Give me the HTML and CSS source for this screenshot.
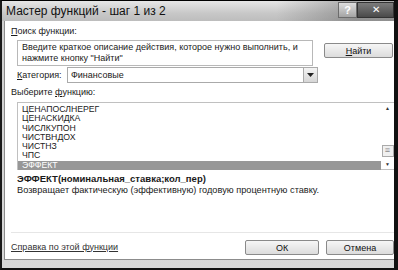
FILE: index.html
```html
<!DOCTYPE html>
<html lang="ru">
<head>
    <meta charset="UTF-8">
    <title>Мастер функций - шаг 1 из 2</title>
    <link rel="stylesheet" href="styles.css">
</head>
<body>
    <div class="window">
        <div class="titlebar">
            <span class="title">Мастер функций - шаг 1 из 2</span>
            <span class="tb-help">?</span>
            <span class="tb-close">✕</span>
        </div>
        <div class="frame">
            <div class="content">
                <div class="label"><u>П</u>оиск функции:</div>
                <div class="search-row">
                    <div class="search-box">Введите краткое описание действия, которое нужно выполнить, и нажмите кнопку "Найти"</div>
                    <button class="btn btn-find"><u>Н</u>айти</button>
                </div>
                <div class="cat-row">
                    <span class="cat-label"><u>К</u>атегория:</span>
                    <div class="select">
                        <span>Финансовые</span>
                        <span class="select-arrow"><svg width="7" height="4" viewBox="0 0 7 4"><path d="M0 0h7L3.5 4z" fill="#222"/></svg></span>
                    </div>
                </div>
                <div class="label label-list">Выберите <u>ф</u>ункцию:</div>
                <div class="list">
                    <div class="list-items">
                        <div class="item">ЦЕНАПОСЛНЕРЕГ</div>
                        <div class="item">ЦЕНАСКИДКА</div>
                        <div class="item">ЧИСЛКУПОН</div>
                        <div class="item">ЧИСТВНДОХ</div>
                        <div class="item">ЧИСТНЗ</div>
                        <div class="item">ЧПС</div>
                        <div class="item selected">ЭФФЕКТ</div>
                    </div>
                    <div class="scrollbar">
                        <span class="sb-arrow">▲</span>
                        <span class="sb-track"></span>
                        <span class="sb-thumb">≡</span>
                        <span class="sb-arrow">▼</span>
                    </div>
                </div>
                <div class="signature">ЭФФЕКТ(номинальная_ставка;кол_пер)</div>
                <div class="desc">Возвращает фактическую (эффективную) годовую процентную ставку.</div>
                <div class="footer">
                    <a class="help-link" href="#">Справка по этой функции</a>
                    <div class="footer-buttons">
                        <button class="btn btn-ok">ОК</button>
                        <button class="btn btn-cancel">Отмена</button>
                    </div>
                </div>
            </div>
        </div>
    </div>
</body>
</html>
```

FILE: styles.css
```css
body { margin: 0; font-family: "Liberation Sans", Arial, sans-serif; font-size: 9px; color: #1a1a1a; }
.window { width: 398px; height: 270px; box-sizing: border-box; display: flex; flex-direction: column; border-top: 1px solid #000; border-left: 2px solid #1a1a1a; border-right: 4px solid #111; border-bottom: 2px solid #111; background: #c8c8c8; }
.titlebar { height: 20px; display: flex; align-items: stretch; background: linear-gradient(to right, rgba(255,255,255,0) 70%, rgba(60,60,60,0.35) 90%), linear-gradient(to bottom, #e6e6e6, #c8c8c8 60%, #bdbdbd); }
.title { flex: 1; padding-left: 4px; line-height: 21px; font-size: 12px; color: #111; }
.tb-help { width: 17px; margin-top: 1px; height: 14px; background: linear-gradient(#dedede, #a4a4a4); border: 1px solid #6c6c6c; color: #fff; font-weight: bold; font-size: 11px; text-align: center; line-height: 14px; }
.tb-close { width: 35px; margin-top: 1px; height: 14px; background: linear-gradient(#7c7c7c, #4a4a4a); border: 1px solid #333; color: #fff; font-size: 10px; text-align: center; line-height: 14px; }
.frame { flex: 1; display: flex; padding: 0 0 8px 2px; background: linear-gradient(to bottom, #cfcfcf, #d8d8d8); }
.content { flex: 1; background: #fff; border-left: 1px solid #8c8c8c; border-bottom: 1px solid #8c8c8c; padding: 0 0 0 6px; display: flex; flex-direction: column; }
.label { margin-top: 4px; height: 12px; line-height: 12px; }
.search-row { display: flex; align-items: flex-start; margin-top: 3px; margin-left: 6px; }
.search-box { width: 286px; height: 22px; padding: 1px 4px; border: 1px solid #b8b8b8; line-height: 11px; }
.btn { font-family: "Liberation Sans", Arial, sans-serif; font-size: 9px; color: #111; background: linear-gradient(#f6f6f6, #dcdcdc); border: 1px solid #8a8a8a; border-radius: 2px; padding: 0; }
.btn-find { width: 69px; height: 15px; margin-left: 11px; margin-top: 3px; }
.cat-row { display: flex; align-items: center; margin-top: 1px; margin-left: 6px; }
.cat-label { width: 50px; }
.select { width: 246px; height: 14px; border: 1px solid #aaa; display: flex; align-items: center; justify-content: space-between; padding-left: 3px; }
.select-arrow { width: 13px; height: 14px; border-left: 1px solid #aaa; background: linear-gradient(#f4f4f4, #d6d6d6); display: flex; align-items: center; justify-content: center; }
.label-list { margin-top: 3px; }
.list { height: 66px; margin-top: 4px; margin-left: 6px; border: 1px solid #c0c0c0; border-right: none; display: flex; }
.list-items { flex: 1; padding-top: 2px; }
.item { height: 9.3px; line-height: 9.3px; padding-left: 4px; font-size: 8.7px; color: #222; }
.item.selected { background: #979797; color: #fff; }
.scrollbar { width: 13px; display: flex; flex-direction: column; align-items: center; font-size: 5px; color: #333; }
.sb-arrow { height: 10px; line-height: 10px; }
.sb-track { flex: 1; }
.sb-thumb { width: 10px; height: 10px; border: 1px solid #aaa; background: #f0f0f0; font-size: 9px; line-height: 9px; text-align: center; color: #888; margin-bottom: 2px; }
.signature { margin-top: 3px; margin-left: 6px; font-weight: bold; font-size: 9.5px; height: 12px; line-height: 12px; }
.desc { margin-left: 6px; height: 11px; line-height: 11px; font-size: 9.2px; }
.footer { margin-top: auto; border-top: 1px solid #e6e6e6; height: 25px; display: flex; align-items: center; justify-content: space-between; padding-top: 1px; }
.help-link { color: #333; text-decoration: underline; }
.footer-buttons { display: flex; gap: 7px; margin-top: 2px; }
.btn-ok { width: 74px; height: 15px; }
.btn-cancel { width: 68px; height: 15px; }
```
